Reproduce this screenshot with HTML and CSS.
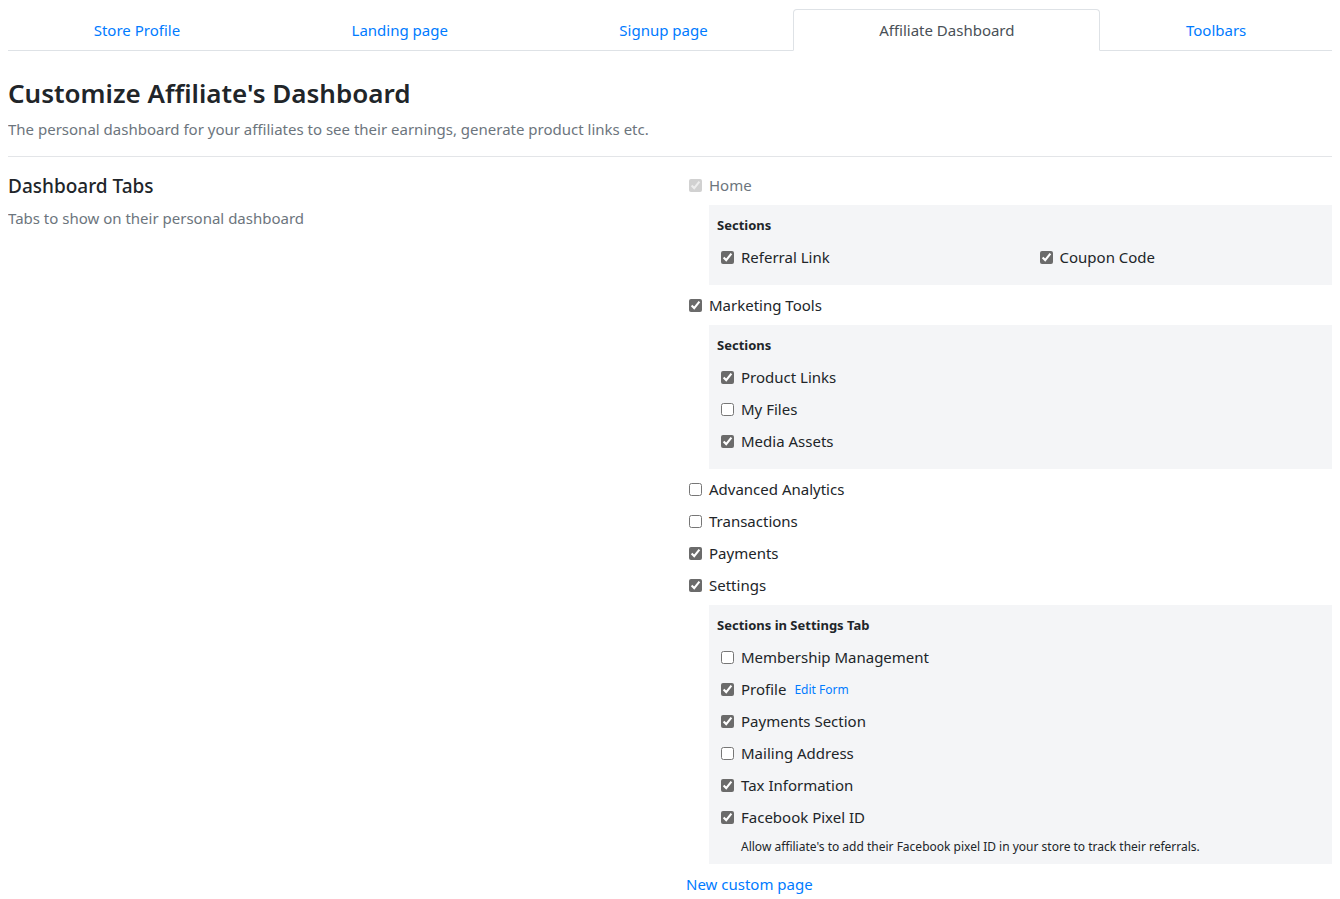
FILE: index.html
```html
<!DOCTYPE html>
<html lang="en">
<head>
<meta charset="utf-8">
<title>Customize Affiliate's Dashboard</title>
<link rel="stylesheet" href="styles.css">
</head>
<body>
<nav class="tabs">
  <a class="tab" href="#">Store Profile</a>
  <a class="tab" href="#">Landing page</a>
  <a class="tab" href="#">Signup page</a>
  <a class="tab active" href="#">Affiliate Dashboard</a>
  <a class="tab" href="#">Toolbars</a>
</nav>

<header class="page-head">
  <h1 class="page-title">Customize Affiliate's Dashboard</h1>
  <p class="page-sub">The personal dashboard for your affiliates to see their earnings, generate product links etc.</p>
</header>
<hr class="divider">

<section class="row">
  <div class="col-left">
    <h2 class="sec-title">Dashboard Tabs</h2>
    <p class="sec-sub">Tabs to show on their personal dashboard</p>
  </div>
  <div class="col-right">
    <label class="check disabled"><input type="checkbox" checked disabled><span>Home</span></label>
    <div class="box">
      <div class="box-title">Sections</div>
      <div class="two-col">
        <label class="check"><input type="checkbox" checked><span>Referral Link</span></label>
        <label class="check"><input type="checkbox" checked><span>Coupon Code</span></label>
      </div>
    </div>

    <label class="check"><input type="checkbox" checked><span>Marketing Tools</span></label>
    <div class="box">
      <div class="box-title">Sections</div>
      <label class="check"><input type="checkbox" checked><span>Product Links</span></label>
      <label class="check"><input type="checkbox"><span>My Files</span></label>
      <label class="check"><input type="checkbox" checked><span>Media Assets</span></label>
    </div>

    <label class="check"><input type="checkbox"><span>Advanced Analytics</span></label>
    <label class="check"><input type="checkbox"><span>Transactions</span></label>
    <label class="check"><input type="checkbox" checked><span>Payments</span></label>
    <label class="check"><input type="checkbox" checked><span>Settings</span></label>
    <div class="box">
      <div class="box-title">Sections in Settings Tab</div>
      <label class="check"><input type="checkbox"><span>Membership Management</span></label>
      <label class="check"><input type="checkbox" checked><span>Profile</span><a class="edit-link" href="#">Edit Form</a></label>
      <label class="check"><input type="checkbox" checked><span>Payments Section</span></label>
      <label class="check"><input type="checkbox"><span>Mailing Address</span></label>
      <label class="check"><input type="checkbox" checked><span>Tax Information</span></label>
      <label class="check"><input type="checkbox" checked><span>Facebook Pixel ID</span></label>
      <p class="help">Allow affiliate's to add their Facebook pixel ID in your store to track their referrals.</p>
    </div>

    <a class="new-page" href="#">New custom page</a>
  </div>
</section>
</body>
</html>
```

FILE: styles.css
```css
* { box-sizing: border-box; }

body {
  margin: 8px;
  font-family: "Noto Sans", "Open Sans", "Liberation Sans", sans-serif;
  font-size: 15px;
  line-height: 24px;
  color: #212529;
  background: #fff;
}

a { color: #007bff; text-decoration: none; }

.tabs {
  display: flex;
  margin-top: 1px;
  border-bottom: 1px solid #dee2e6;
}

.tab {
  flex: 1 1 auto;
  text-align: center;
  padding: 8px 16px;
  border: 1px solid transparent;
  border-radius: 4px 4px 0 0;
  margin-bottom: -1px;
  line-height: 24px;
}

.tab.active {
  color: #495057;
  background: #fff;
  border-color: #dee2e6 #dee2e6 #fff;
}

.page-head { margin-top: 25px; }

.page-title {
  margin: 0 0 7px;
  font-size: 26px;
  line-height: 34px;
  font-weight: 600;
}

.page-sub {
  margin: 0 0 15px;
  color: #6c757d;
}

.divider {
  margin: 0 0 16px;
  border: 0;
  border-top: 1px solid #e3e5e8;
}

.row {
  display: grid;
  grid-template-columns: 1fr 1fr;
}

.col-left { padding-right: 15px; }

.sec-title {
  margin: 1px 0 8px;
  font-size: 19px;
  line-height: 24px;
  font-weight: 500;
}

.sec-sub {
  margin: 0;
  color: #6c757d;
}

.col-right {
  display: flex;
  flex-direction: column;
  align-items: stretch;
  padding-left: 15px;
}

.check {
  display: flex;
  align-items: center;
  height: 24px;
  margin-bottom: 8px;
  padding-left: 4px;
}

.check input {
  width: 13px;
  height: 13px;
  margin: 0 7px 0 0;
  accent-color: #6b6b6b;
  flex: none;
}

.check.disabled { color: #6c757d; }

.box {
  margin: 0 0 8px 24px;
  padding: 8px 8px 0;
  background: #f4f5f7;
}

.box-title {
  font-size: 13px;
  line-height: 24px;
  font-weight: 700;
  margin-bottom: 8px;
}

.box .check:last-child { margin-bottom: 16px; }

.two-col {
  display: grid;
  grid-template-columns: 1fr 1fr;
  column-gap: 30px;
}

.edit-link {
  font-size: 12px;
  margin: 2px 0 0 8px;
}

.help {
  margin: 0 0 8px;
  padding-left: 24px;
  font-size: 12px;
  line-height: 19px;
}

.new-page {
  align-self: flex-start;
  margin-left: 1px;
}
```
